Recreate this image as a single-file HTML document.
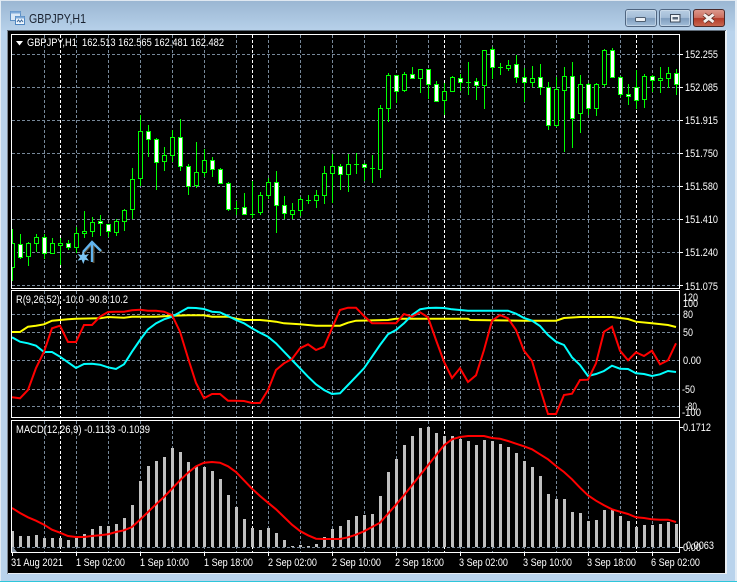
<!DOCTYPE html>
<html><head><meta charset="utf-8"><title>GBPJPY,H1</title>
<style>
html,body{margin:0;padding:0;background:#b9d3ec;width:737px;height:582px;overflow:hidden}
svg{display:block}
text{font-family:"Liberation Sans",sans-serif;font-size:11px;fill:#fff}
</style></head><body>
<svg width="737" height="582" viewBox="0 0 737 582" xmlns="http://www.w3.org/2000/svg">
<defs>
<linearGradient id="fr" x1="0" y1="0" x2="0" y2="1"><stop offset="0" stop-color="#9ab6d2"/><stop offset="1" stop-color="#b7d1ea"/></linearGradient>
<linearGradient id="bt" x1="0" y1="0" x2="0" y2="1"><stop offset="0" stop-color="#b9cfe4"/><stop offset=".48" stop-color="#a3bcd6"/><stop offset=".52" stop-color="#7f9dbd"/><stop offset="1" stop-color="#a5c0dc"/></linearGradient>
<linearGradient id="cl" x1="0" y1="0" x2="0" y2="1"><stop offset="0" stop-color="#dd9a8e"/><stop offset=".48" stop-color="#cb6f60"/><stop offset=".52" stop-color="#b33a28"/><stop offset="1" stop-color="#c96a52"/></linearGradient>
<clipPath id="m"><rect x="12" y="35" width="667" height="253"/></clipPath>
<clipPath id="p2"><rect x="12" y="291" width="667" height="126"/></clipPath>
<clipPath id="p3"><rect x="12" y="421" width="667" height="131"/></clipPath>
</defs>

<!-- frame -->
<rect width="737" height="582" fill="#b9d3ec"/>
<rect x="0" y="0" width="737" height="31" fill="url(#fr)"/>
<rect x="1" y="0" width="735" height="1" fill="#dfe8f1"/>
<rect x="0" y="0" width="1" height="581" fill="#e2ecf5"/>
<rect x="735" y="0" width="2" height="581" fill="#e2ecf5"/>
<rect x="0" y="581" width="737" height="1" fill="#2ec6da"/>
<rect x="7" y="30" width="720" height="544" fill="#e8eef4"/>
<rect x="7" y="30" width="1" height="544" fill="#7d8792"/>
<rect x="7" y="30" width="719" height="1" fill="#5f6b78"/>
<rect x="8" y="31" width="717" height="542" fill="#000"/>

<!-- title icon -->
<g shape-rendering="crispEdges">
<rect x="10.5" y="11.5" width="10" height="9" fill="#dbe9f7" stroke="#5d8fc4"/>
<rect x="10.5" y="11.5" width="10" height="2" fill="#7da9d8"/>
<rect x="15.5" y="16.5" width="9" height="8" fill="#eef5fc" stroke="#4f86c0"/>
<rect x="15.5" y="16.5" width="9" height="2" fill="#7da9d8"/>
</g>
<path d="M17 22l1.5-2 1.5 2 1.500-2 1.500 2" fill="none" stroke="#3d6a9c"/>
<text x="29" y="23" style="font-size:12.5px;fill:#1a2230" textLength="57" lengthAdjust="spacingAndGlyphs">GBPJPY,H1</text>

<!-- window buttons -->
<rect x="625.500" y="9.500" width="31" height="17" rx="2.500" fill="url(#bt)" stroke="#4f6580"/>
<rect x="626.500" y="10.500" width="29" height="15" rx="1.500" fill="none" stroke="#d5e3f0" stroke-opacity=".6"/>
<rect x="635.500" y="17.500" width="10" height="4" rx="1" fill="#eef2f6" stroke="#4f5e70"/>
<rect x="659.500" y="9.500" width="31" height="17" rx="2.500" fill="url(#bt)" stroke="#4f6580"/>
<rect x="660.500" y="10.500" width="29" height="15" rx="1.500" fill="none" stroke="#d5e3f0" stroke-opacity=".6"/>
<rect x="670.500" y="14.500" width="9.500" height="7.500" fill="#eef2f6" stroke="#3d4a5a"/>
<rect x="672.500" y="17" width="5.500" height="2.500" fill="#5a6878"/>
<rect x="693.500" y="9.500" width="31" height="17" rx="2.500" fill="url(#cl)" stroke="#4a2a2a"/>
<path d="M704 14.500l9.500 7.500M713.500 14.500l-9.500 7.500" stroke="#5a2a22" stroke-width="4.500" fill="none"/>
<path d="M704 14.500l9.500 7.500M713.500 14.500l-9.500 7.500" stroke="#f4f0ee" stroke-width="3" fill="none"/>

<!-- MAIN PANE -->
<g clip-path="url(#m)">
<path shape-rendering="crispEdges" fill="none" stroke="#778899" stroke-dasharray="3 2" d="M12 54.500H679M12 87.500H679M12 120.500H679M12 153.500H679M12 186.500H679M12 219.500H679M12 252.500H679M12 285.500H679M44.500 35V288M76.500 35V288M108.500 35V288M140.500 35V288M172.500 35V288M204.500 35V288M236.500 35V288M268.500 35V288M300.500 35V288M332.500 35V288M364.500 35V288M396.500 35V288M428.500 35V288M460.500 35V288M492.500 35V288M524.500 35V288M556.500 35V288M588.500 35V288M620.500 35V288M652.500 35V288"/>
<path shape-rendering="crispEdges" fill="none" stroke="#fff" stroke-dasharray="3 2" d="M60.500 35V288M252.500 35V288M444.500 35V288M636.500 35V288"/>
<!-- wicks -->
<path shape-rendering="crispEdges" fill="none" stroke="#0f0" d="M12.500 229V281M20.500 234V259M28.500 242V266M36.500 234V252M44.500 234V259M52.500 238V254M60.500 238V265M68.500 240V250M76.500 227V253M84.500 211V238M92.500 217V237M100.500 215V236M108.500 224V237M116.500 219V236M124.500 209V231M132.500 168V219M140.500 115V186M148.500 125V157M156.500 138V190M164.500 147V171M172.500 130V162M180.500 119V171M188.500 164V195M196.500 142V188M204.500 149V177M212.500 157V177M220.500 168V184M228.500 182V211M236.500 201V215M234 208.500h5M244.500 193V215M252.500 181V218M250 214.500h5M260.500 192V215M268.500 178V199M276.500 171V233M284.500 196V219M292.500 203V219M300.500 197V216M308.500 195V204M306 200.500h5M316.500 190V208M324.500 166V204M332.500 154V203M340.500 164V190M348.500 154V192M356.500 153V174M354 164.500h5M364.500 163V181M372.500 155V183M370 168.500h5M380.500 105V178M388.500 73V122M396.500 75V103M404.500 72V92M412.500 67V79M420.500 69V93M428.500 69V99M436.500 81V102M444.500 83V115M452.500 76V92M460.500 74V91M468.500 62V95M466 82.500h5M476.500 78V100M484.500 50V109M492.500 47V79M500.500 63V75M498 67.500h5M508.500 60V71M516.500 55V83M524.500 68V102M532.500 66V87M540.500 64V95M548.500 82V130M556.500 77V127M564.500 67V152M572.500 62V148M580.500 75V133M588.500 83V115M596.500 83V116M604.500 49V87M612.500 48V78M620.500 76V97M628.500 84V105M636.500 70V109M644.500 74V108M652.500 75V92M660.500 67V93M668.500 67V88M676.500 69V95"/>
<!-- hollow bodies -->
<path shape-rendering="crispEdges" fill="#000" stroke="#0f0" d="M10.500 243.500h4v24h-4zM26.500 243.500h4v13h-4zM34.500 237.500h4v6h-4zM50.500 243.500h4v10h-4zM58.500 243.500h4v2h-4zM74.500 233.500h4v14h-4zM82.500 231.500h4v2h-4zM90.500 222.500h4v9h-4zM114.500 221.500h4v11h-4zM122.500 210.500h4v11h-4zM130.500 179.500h4v30h-4zM138.500 131.500h4v47h-4zM162.500 155.500h4v6h-4zM170.500 137.500h4v18h-4zM194.500 172.500h4v13h-4zM202.500 160.500h4v12h-4zM258.500 195.500h4v17h-4zM266.500 182.500h4v13h-4zM290.500 210.500h4v4h-4zM298.500 199.500h4v11h-4zM314.500 195.500h4v5h-4zM322.500 173.500h4v22h-4zM330.500 166.500h4v7h-4zM346.500 164.500h4v10h-4zM378.500 108.500h4v61h-4zM386.500 75.500h4v33h-4zM402.500 74.500h4v16h-4zM418.500 69.500h4v9h-4zM442.500 91.500h4v9h-4zM450.500 77.500h4v14h-4zM482.500 50.500h4v35h-4zM506.500 65.500h4v3h-4zM530.500 78.500h4v4h-4zM554.500 89.500h4v36h-4zM562.500 76.500h4v14h-4zM578.500 84.500h4v29h-4zM594.500 84.500h4v24h-4zM602.500 50.500h4v34h-4zM642.500 76.500h4v23h-4zM658.500 78.500h4v2h-4zM666.500 73.500h4v5h-4z"/>
<!-- filled bodies -->
<path shape-rendering="crispEdges" fill="#fff" stroke="#0f0" d="M18.500 244.500h4v13h-4zM42.500 237.500h4v16h-4zM66.500 243.500h4v4h-4zM98.500 221.500h4v2h-4zM106.500 224.500h4v7h-4zM146.500 131.500h4v8h-4zM154.500 139.500h4v23h-4zM178.500 137.500h4v29h-4zM186.500 166.500h4v20h-4zM210.500 160.500h4v9h-4zM218.500 169.500h4v14h-4zM226.500 183.500h4v26h-4zM242.500 207.500h4v7h-4zM274.500 182.500h4v23h-4zM282.500 205.500h4v8h-4zM338.500 166.500h4v8h-4zM362.500 164.500h4v3h-4zM394.500 75.500h4v16h-4zM410.500 74.500h4v4h-4zM426.500 69.500h4v15h-4zM434.500 84.500h4v17h-4zM458.500 78.500h4v4h-4zM474.500 81.500h4v4h-4zM490.500 49.500h4v18h-4zM514.500 64.500h4v13h-4zM522.500 77.500h4v5h-4zM538.500 77.500h4v10h-4zM546.500 87.500h4v38h-4zM570.500 76.500h4v42h-4zM586.500 84.500h4v24h-4zM610.500 50.500h4v27h-4zM618.500 77.500h4v17h-4zM626.500 94.500h4v2h-4zM634.500 87.500h4v13h-4zM650.500 76.500h4v4h-4zM674.500 73.500h4v11h-4z"/>
<!-- arrow + star -->
<path d="M84 253l9 -10l9 9M93.500 244V263" fill="none" stroke="#5a4a30" stroke-width="2"/>
<path d="M83 252l9 -10l9 9M92 243V262" fill="none" stroke="#62b4ee" stroke-width="2.400"/>
<path d="M83.300 251l1.600 4 4.100 -1 -2.700 3.300 2.700 3.500 -4.100 -1 -1.600 4.200 -1.700 -4.200 -4.100 1 2.700 -3.500 -2.700 -3.300 4.100 1z" fill="#7cc4f2"/>
</g>

<!-- RSI-like pane -->
<g clip-path="url(#p2)">
<path shape-rendering="crispEdges" fill="none" stroke="#778899" stroke-dasharray="3 2" d="M12 314.500H679M12 332.500H679M12 360.500H679M12 389.500H679M12 406.500H679M44.500 291V417M76.500 291V417M108.500 291V417M140.500 291V417M172.500 291V417M204.500 291V417M236.500 291V417M268.500 291V417M300.500 291V417M332.500 291V417M364.500 291V417M396.500 291V417M428.500 291V417M460.500 291V417M492.500 291V417M524.500 291V417M556.500 291V417M588.500 291V417M620.500 291V417M652.500 291V417"/>
<path shape-rendering="crispEdges" fill="none" stroke="#fff" stroke-dasharray="3 2" d="M60.500 291V417M252.500 291V417M444.500 291V417M636.500 291V417"/>
<polyline fill="none" stroke="#ff0" stroke-width="2" points="12,332 20,332 28,326.700 36,325.700 44,324.300 52,320.700 60,320 68,319.300 76,318.700 100,318.300 108,317 124,317.700 132,316.700 156,316.700 172,315.700 188,315.300 204,315.300 212,316.700 228,316.700 236,318.700 244,320 260,320 268,320.700 276,321.700 284,323.300 300,324.300 316,325.700 332,325.700 340,325.700 348,322.700 356,320.700 388,320 396,318.700 468,318.700 470,320 524,320.700 556,320.700 564,318 580,317 612,317 628,319 636,321.700 652,323.300 668,325 676,327"/>
<polyline fill="none" stroke="#0ff" stroke-width="2" points="12,337.300 20,341.700 28,343.300 36,345.700 44,352 52,352 60,356.700 68,362.300 76,368 84,364 92,363.700 100,364.700 108,367.300 116,369 124,364.300 132,351.700 140,340 148,329.300 156,323.300 164,319.300 172,316.700 180,312.300 188,307.700 196,308 204,309 212,311.700 220,312.300 228,316 236,320 244,323.300 252,328.300 260,332.700 268,336.700 276,343.300 284,351.700 292,360 300,368.300 308,376.700 316,384.300 324,390 332,394 340,393.300 348,385 356,376.700 364,368.300 372,356.700 380,345 388,334.300 396,330 404,323.300 412,315 420,309.300 428,308 436,307.700 444,308 452,309.300 460,310 468,310.700 492,310.700 508,310.700 516,313.700 524,318 532,320.700 540,326 548,335 556,341.700 564,345 572,357.300 580,365 588,376 596,374 604,371 612,365.700 620,368.700 628,369 636,373.300 644,374 652,376 660,374.300 668,371 676,372"/>
<polyline fill="none" stroke="#f00" stroke-width="2" points="12,397.300 20,398.300 28,390 36,368 44,351.700 52,328.300 60,325.700 68,342 76,342 84,325 92,325 100,316.700 108,312 116,311.700 124,311.700 132,310.300 140,309.700 148,310.700 156,310.700 164,311.700 172,315 180,331.700 188,358 196,383 204,398.300 212,394 220,394 228,400.700 236,400.700 244,401 252,403 260,403 268,390 276,370 284,363.300 292,359 300,348.300 308,344.300 316,350 324,346.700 332,328.300 340,310 348,307.700 356,307.700 364,316 372,323.300 380,323.300 388,323.300 396,323.300 404,314 412,316.700 420,312.300 428,317.300 436,340 444,361.700 452,378 460,368.300 468,382 476,375.300 484,350 492,320.700 500,315 508,318.300 516,330 524,350.700 532,361 540,388.300 548,414 556,414 564,395 572,393.700 580,380 588,379.700 596,363.300 604,331.700 612,326.700 620,350.700 628,360.300 636,352.300 644,356 652,350.700 660,364.300 668,360.300 676,343.300"/>
</g>

<!-- MACD pane -->
<g clip-path="url(#p3)">
<path shape-rendering="crispEdges" fill="none" stroke="#778899" stroke-dasharray="3 2" d="M12 547.500H679M44.500 421V552M76.500 421V552M108.500 421V552M140.500 421V552M172.500 421V552M204.500 421V552M236.500 421V552M268.500 421V552M300.500 421V552M332.500 421V552M364.500 421V552M396.500 421V552M428.500 421V552M460.500 421V552M492.500 421V552M524.500 421V552M556.500 421V552M588.500 421V552M620.500 421V552M652.500 421V552"/>
<path shape-rendering="crispEdges" fill="none" stroke="#fff" stroke-dasharray="3 2" d="M60.500 421V552M252.500 421V552M444.500 421V552M636.500 421V552"/>
<path shape-rendering="crispEdges" fill="#c0c0c0" d="M12 531h2v16h-2zM19 536h3v11h-3zM27 536h3v11h-3zM35 535h3v12h-3zM43 538h3v9h-3zM51 538h3v9h-3zM59 538h3v9h-3zM67 540h3v7h-3zM75 538h3v9h-3zM83 534h3v13h-3zM91 529h3v18h-3zM99 526h3v21h-3zM107 526h3v21h-3zM115 524h3v23h-3zM123 518h3v29h-3zM131 505h3v42h-3zM139 481h3v66h-3zM147 466h3v81h-3zM155 461h3v86h-3zM163 457h3v90h-3zM171 448h3v99h-3zM179 452h3v95h-3zM187 462h3v85h-3zM195 466h3v81h-3zM203 467h3v80h-3zM211 471h3v76h-3zM219 479h3v68h-3zM227 495h3v52h-3zM235 507h3v40h-3zM243 519h3v28h-3zM251 528h3v19h-3zM259 530h3v17h-3zM267 528h3v19h-3zM275 533h3v14h-3zM283 540h3v7h-3zM291 546h3v1h-3zM299 545h3v2h-3zM307 546h3v1h-3zM315 544h3v3h-3zM323 537h3v10h-3zM331 529h3v18h-3zM339 526h3v21h-3zM347 520h3v27h-3zM355 516h3v31h-3zM363 515h3v32h-3zM371 514h3v33h-3zM379 496h3v51h-3zM387 472h3v75h-3zM395 459h3v88h-3zM403 445h3v102h-3zM411 436h3v111h-3zM419 428h3v119h-3zM427 427h3v120h-3zM435 433h3v114h-3zM443 436h3v111h-3zM451 436h3v111h-3zM459 439h3v108h-3zM467 441h3v106h-3zM475 445h3v102h-3zM483 440h3v107h-3zM491 441h3v106h-3zM499 444h3v103h-3zM507 447h3v100h-3zM515 453h3v94h-3zM523 461h3v86h-3zM531 467h3v80h-3zM539 476h3v71h-3zM547 494h3v53h-3zM555 499h3v48h-3zM563 499h3v48h-3zM571 512h3v35h-3zM579 513h3v34h-3zM587 521h3v26h-3zM595 520h3v27h-3zM603 510h3v37h-3zM611 510h3v37h-3zM619 516h3v31h-3zM627 521h3v26h-3zM635 527h3v20h-3zM643 525h3v22h-3zM651 525h3v22h-3zM659 524h3v23h-3zM667 522h3v25h-3zM675 524h3v23h-3z"/>
<path d="M12 547h1l4 5h-5z" fill="#8a97a5"/>
<polyline fill="none" stroke="#f00" stroke-width="2" points="12,508 20,513 28,517.300 36,520.700 44,524.700 52,529.700 60,532.700 68,536 76,537 84,537 92,536 100,535.300 108,534.300 116,532 124,530.300 132,527 140,519.700 148,512 156,504.300 164,497 172,488.700 180,480.300 188,472.700 196,466.300 204,462.700 212,462 220,462.700 228,466.300 236,472 244,480.300 252,488.700 260,496 268,502.700 276,509.300 284,517 292,524.700 300,531 308,535.300 316,538.700 324,539 332,539 340,539 348,537.300 356,534.700 364,531.300 372,527 380,522.700 388,513.700 396,504.700 404,495.300 412,485.300 420,475.300 428,465.300 436,455.300 444,445.300 452,439.300 460,437 468,436 484,436 492,438 500,438.700 508,441 516,443.700 524,446.300 532,449.300 540,454.300 548,459.300 556,466 564,472 572,479.300 580,487.700 588,495.300 596,500.700 604,505.300 612,509.300 620,511.700 628,514 636,517.300 644,518 652,519.300 660,519.700 668,519.700 676,522"/>
</g>

<!-- pane borders & ticks -->
<g shape-rendering="crispEdges" fill="none" stroke="#fff">
<rect x="11.500" y="34.500" width="668" height="254"/>
<rect x="11.500" y="290.500" width="668" height="127"/>
<rect x="11.500" y="420.500" width="668" height="132"/>
<path d="M680 54.500h3M680 87.500h3M680 120.500h3M680 153.500h3M680 186.500h3M680 219.500h3M680 252.500h3M680 285.500h3M680 547.500h3M680 427.500h3M12.500 553v3M76.500 553v3M140.500 553v3M204.500 553v3M268.500 553v3M332.500 553v3M396.500 553v3M460.500 553v3M524.500 553v3M588.500 553v3M652.500 553v3"/>
</g>

<!-- main labels -->
<path d="M16 41h7l-3.500 4.500z" fill="#fff"/>
<text x="27" y="46" textLength="197" lengthAdjust="spacingAndGlyphs" xml:space="preserve">GBPJPY,H1  162.513 162.565 162.481 162.482</text>
<text x="16" y="303" textLength="112" lengthAdjust="spacingAndGlyphs">R(9,26,52) -10.0 -90.8 10.2</text>
<text x="16" y="433" textLength="134" lengthAdjust="spacingAndGlyphs">MACD(12,26,9) -0.1133 -0.1039</text>

<!-- price scale -->
<g>
<text x="685" y="58" textLength="33" lengthAdjust="spacingAndGlyphs">152.255</text>
<text x="685" y="91" textLength="33" lengthAdjust="spacingAndGlyphs">152.085</text>
<text x="685" y="124" textLength="33" lengthAdjust="spacingAndGlyphs">151.915</text>
<text x="685" y="157" textLength="33" lengthAdjust="spacingAndGlyphs">151.750</text>
<text x="685" y="190" textLength="33" lengthAdjust="spacingAndGlyphs">151.580</text>
<text x="685" y="223" textLength="33" lengthAdjust="spacingAndGlyphs">151.410</text>
<text x="685" y="256" textLength="33" lengthAdjust="spacingAndGlyphs">151.240</text>
<text x="685" y="290" textLength="33" lengthAdjust="spacingAndGlyphs">151.075</text>
<text x="683" y="301" textLength="15" lengthAdjust="spacingAndGlyphs">120</text>
<text x="683" y="307" textLength="15" lengthAdjust="spacingAndGlyphs">100</text>
<text x="683" y="318" textLength="10" lengthAdjust="spacingAndGlyphs">80</text>
<text x="683" y="336" textLength="10" lengthAdjust="spacingAndGlyphs">50</text>
<text x="683" y="364" textLength="18" lengthAdjust="spacingAndGlyphs">0.00</text>
<text x="682" y="393" textLength="13" lengthAdjust="spacingAndGlyphs">-50</text>
<text x="685" y="410" textLength="12" lengthAdjust="spacingAndGlyphs">-80</text>
<text x="682" y="416" textLength="19" lengthAdjust="spacingAndGlyphs">-100</text>
<text x="683" y="431" textLength="28" lengthAdjust="spacingAndGlyphs">0.1712</text>
<text x="683" y="551" textLength="18" lengthAdjust="spacingAndGlyphs">0.00</text>
<text x="686" y="549" textLength="28" lengthAdjust="spacingAndGlyphs">0.0063</text>
</g>

<!-- time scale -->
<g>
<text x="11" y="566" textLength="52" lengthAdjust="spacingAndGlyphs">31 Aug 2021</text>
<text x="76" y="566" textLength="49" lengthAdjust="spacingAndGlyphs">1 Sep 02:00</text>
<text x="140" y="566" textLength="49" lengthAdjust="spacingAndGlyphs">1 Sep 10:00</text>
<text x="204" y="566" textLength="49" lengthAdjust="spacingAndGlyphs">1 Sep 18:00</text>
<text x="268" y="566" textLength="49" lengthAdjust="spacingAndGlyphs">2 Sep 02:00</text>
<text x="332" y="566" textLength="49" lengthAdjust="spacingAndGlyphs">2 Sep 10:00</text>
<text x="395" y="566" textLength="49" lengthAdjust="spacingAndGlyphs">2 Sep 18:00</text>
<text x="459" y="566" textLength="49" lengthAdjust="spacingAndGlyphs">3 Sep 02:00</text>
<text x="523" y="566" textLength="49" lengthAdjust="spacingAndGlyphs">3 Sep 10:00</text>
<text x="587" y="566" textLength="49" lengthAdjust="spacingAndGlyphs">3 Sep 18:00</text>
<text x="651" y="566" textLength="49" lengthAdjust="spacingAndGlyphs">6 Sep 02:00</text>
</g>
</svg>
</body></html>
